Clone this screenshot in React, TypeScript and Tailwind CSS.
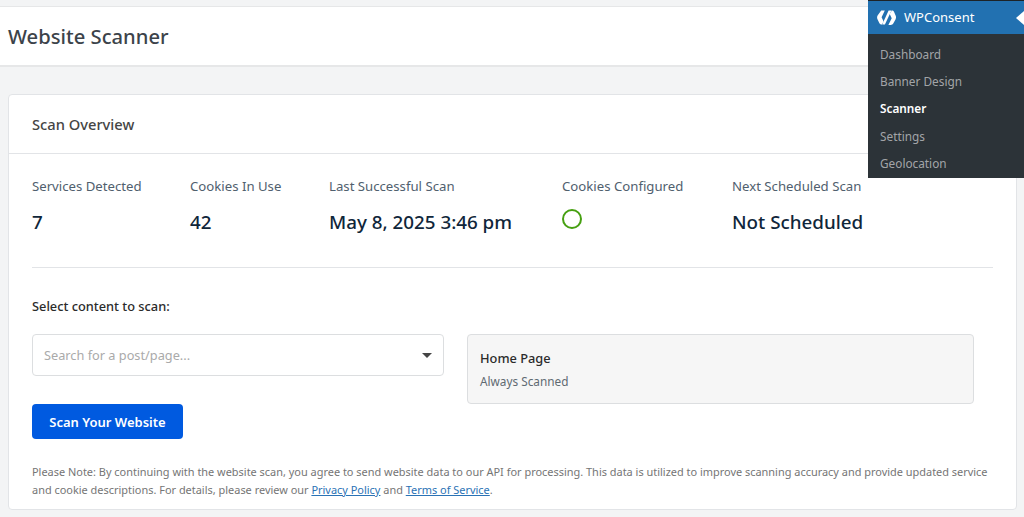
const stats = [
  { label: "Services Detected", value: "7" },
  { label: "Cookies In Use", value: "42" },
  { label: "Last Successful Scan", value: "May 8, 2025 3:46 pm" },
  { label: "Cookies Configured", value: null },
  { label: "Next Scheduled Scan", value: "Not Scheduled" },
];

const menuItems = ["Dashboard", "Banner Design", "Scanner", "Settings", "Geolocation"];

function WpcLogo() {
  return (
    <svg width="19" height="15" viewBox="0 0 19 15" fill="#ffffff">
      <path d="M4.2 0.6h3.6L4.6 7.2l2 4.2-1.7 3.1c-1.1 0-2-.5-2.6-1.5L0.6 9.6c-.7-1.4-.7-2.9 0-4.2z" />
      <path d="M11.6 0.6h2.9L7.9 14.4H5.2z" />
      <path d="M14.8 0.6c1 0 1.8.5 2.3 1.4l1.4 3.2c.7 1.4.7 2.9 0 4.3l-2.1 3.7c-.6 1.1-1.5 1.7-2.7 1.7h-2.3l3.3-6.6-2-4.3z" />
    </svg>
  );
}

export default function App() {
  return (
    <div className="relative h-[517px] w-[1024px] overflow-hidden bg-[#f3f4f5] font-['Noto_Sans',sans-serif]">
      {/* Header */}
      <div className="mt-[6px] flex h-[61px] items-center border-y border-b-2 border-y-[#e6e7e8] bg-white pt-px pl-2">
        <h1 className="text-[20.2px] font-medium text-[#3c434a]">Website Scanner</h1>
      </div>

      {/* Scan overview card */}
      <div className="mx-2 mt-[27px] h-[416px] w-[1009px] rounded border border-[#e2e4e7] bg-white">
        <div className="flex h-[59px] items-center border-b border-[#e2e4e7] px-[23px]">
          <h2 className="text-[14.7px] font-medium text-[#454545]">Scan Overview</h2>
        </div>

        <div className="px-[23px] pt-[23px]">
          <div className="grid h-[91px] grid-cols-[110px_91px_185px_122px_auto] content-start gap-x-12 border-b border-[#e2e4e7]">
            {stats.map((stat) => (
              <div key={stat.label} className="whitespace-nowrap">
                <div className="text-[13.2px] leading-[18px] text-[#50606e]">{stat.label}</div>
                {stat.value ? (
                  <div className="mt-[14px] text-[18.8px] leading-[26px] font-medium text-[#10263a]">
                    {stat.value}
                  </div>
                ) : (
                  <div className="mt-[14px] h-5 w-5 rounded-full border-2 border-[#46a011]" />
                )}
              </div>
            ))}
          </div>

          <div className="mt-[29px] text-[12.8px] leading-[18px] font-medium text-[#2b2b2b]">
            Select content to scan:
          </div>

          <div className="mt-[19px] flex items-start gap-[23px]">
            <div className="flex h-[42px] w-[412px] items-center justify-between rounded border border-[#dcdee0] bg-white px-[11px] pt-px">
              <span className="text-[12.75px] text-[#aaaaaa]">Search for a post/page...</span>
              <div className="h-0 w-0 border-x-[5px] border-t-[5px] border-x-transparent border-t-[#454545]" />
            </div>
            <div className="h-[70px] w-[507px] rounded border border-[#dcdee0] bg-[#f6f6f6] pt-[14px] pl-3">
              <div className="text-[12.8px] leading-[19px] font-medium text-[#2b2b2b]">Home Page</div>
              <div className="mt-[4px] text-[11.8px] leading-[18px] text-[#5f6a72]">Always Scanned</div>
            </div>
          </div>

          <button className="flex h-[35px] w-[151px] items-center justify-center rounded bg-[#005ae0] pt-0.5 text-[13px] font-semibold text-white">
            Scan Your Website
          </button>

          <p className="mt-[24px] text-[10.95px] leading-[18px] text-[#757575]">
            Please Note: By continuing with the website scan, you agree to send website data to our API for processing. This data is utilized to improve scanning accuracy and provide updated service and cookie descriptions. For details, please review our{" "}
            <a className="text-[#2a72b5] underline">Privacy Policy</a> and{" "}
            <a className="text-[#2a72b5] underline">Terms of Service</a>.
          </p>
        </div>
      </div>

      {/* WP admin submenu */}
      <div className="absolute top-0 left-[868px] h-[178px] w-[156px] bg-[#2c3338]">
        <div className="flex h-[34px] items-center gap-2 border-t border-[#1d2327] bg-[#2271b1] pl-[9px] text-[13px] text-white">
          <WpcLogo />
          <span>WPConsent</span>
          <div className="absolute top-[11px] right-0 h-0 w-0 border-y-[7px] border-r-[8px] border-y-transparent border-r-white" />
        </div>
        <div className="pt-[6.5px] pl-3">
          {menuItems.map((item) => (
            <div
              key={item}
              className={`h-[27.4px] text-[11.8px] leading-[27px] ${
                item === "Scanner" ? "font-semibold text-white" : "text-[#c3c4c7]/80"
              }`}
            >
              {item}
            </div>
          ))}
        </div>
      </div>
    </div>
  );
}
